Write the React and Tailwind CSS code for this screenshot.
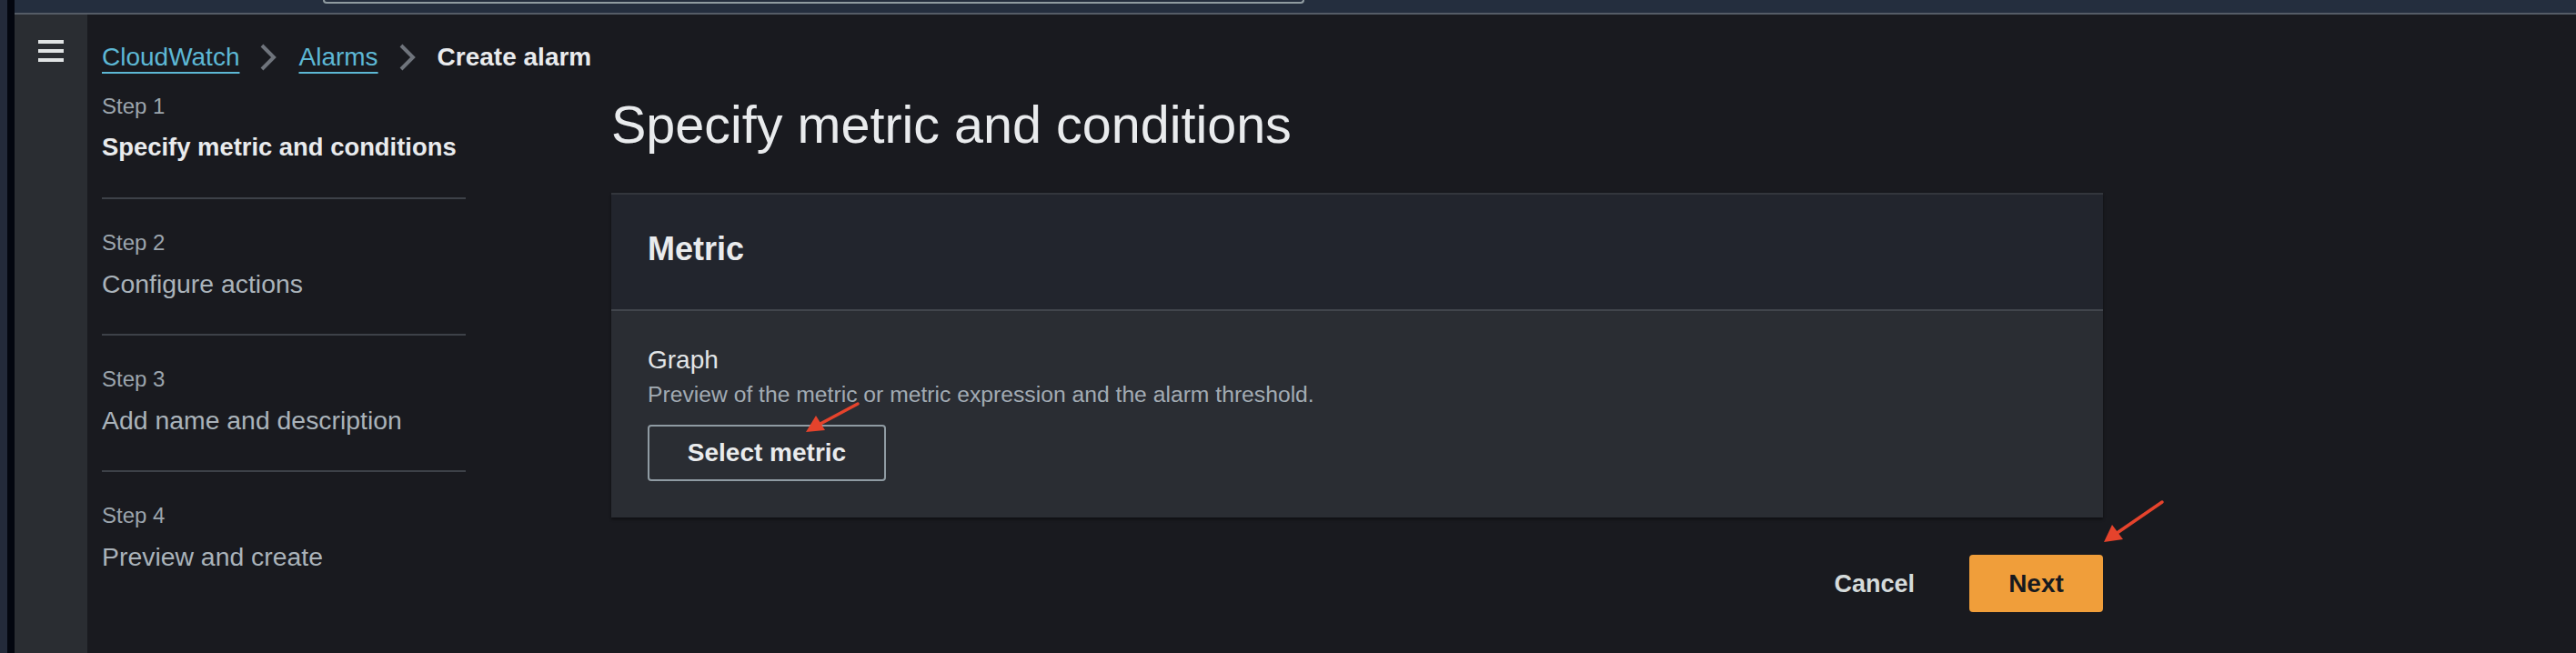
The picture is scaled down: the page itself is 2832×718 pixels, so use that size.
import React from "react";

const steps = [
  { label: "Step 1", title: "Specify metric and conditions", current: true },
  { label: "Step 2", title: "Configure actions" },
  { label: "Step 3", title: "Add name and description" },
  { label: "Step 4", title: "Preview and create" },
];

function Chevron() {
  return (
    <svg width="20" height="30" viewBox="0 0 20 30" className="shrink-0">
      <polyline points="3,2 16,15 3,28" fill="none" stroke="#6f747c" strokeWidth="4" />
    </svg>
  );
}

export default function App() {
  return (
    <div className="relative flex min-h-[718px] w-[2832px] overflow-hidden bg-[#191a1f] font-['Liberation_Sans',Arial,sans-serif]">
      {/* window edge */}
      <div className="w-[8px] shrink-0 bg-[#232a3a]" />
      <div className="w-[8px] shrink-0 bg-[#03060f]" />

      <div className="flex flex-1 flex-col">
        {/* Top nav (mostly cropped) */}
        <header className="h-[16px] shrink-0 border-b-2 border-[#555c66] bg-[#242e3e]">
          <div className="ml-[339px] h-[4px] w-[1079px] rounded-b-[5px] border-x-2 border-b-2 border-[#8f9ba0]" />
        </header>

        <div className="flex flex-1">
          {/* Side rail */}
          <aside className="flex w-[80px] shrink-0 justify-center bg-[#2a2d32] pt-[28px]">
            <div className="flex h-[24px] w-[28px] flex-col justify-between">
              <span className="h-[4px] w-full bg-[#e0e3e4]" />
              <span className="h-[4px] w-full bg-[#e0e3e4]" />
              <span className="h-[4px] w-full bg-[#e0e3e4]" />
            </div>
          </aside>

          <main className="flex-1 pl-[16px] pt-[27px]">
            {/* Breadcrumbs */}
            <nav className="flex items-center gap-[22px] text-[28px] leading-[40px]">
              <a className="text-[#5db8d5] underline decoration-2 underline-offset-[7px]">CloudWatch</a>
              <Chevron />
              <a className="ml-[1px] text-[#5db8d5] underline decoration-2 underline-offset-[7px]">Alarms</a>
              <Chevron />
              <span className="ml-[1px] font-bold text-[#e9ebed]">Create alarm</span>
            </nav>

            <div className="mt-[18px] flex gap-[160px]">
              {/* Wizard steps */}
              <ol className="w-[400px] shrink-0">
                {steps.map((s, i) => (
                  <li
                    key={s.label}
                    className={`${i === 0 ? "" : "pt-[32px]"} ${
                      i === steps.length - 1 ? "" : "border-b-2 border-[#3d4148] pb-[35px]"
                    }`}
                  >
                    <div className="text-[24px] leading-[32px] text-[#9ca5ad]">{s.label}</div>
                    <div
                      className={`mt-[9px] leading-[40px] ${
                        s.current ? "text-[27.4px] font-bold text-[#e9ebed]" : "text-[28.4px] text-[#aab3ba]"
                      }`}
                    >
                      {s.title}
                    </div>
                  </li>
                ))}
              </ol>

              {/* Content */}
              <section className="w-[1640px] shrink-0">
                <h1 className="text-[57.5px] font-normal leading-[72px] text-[#e9ebed]">
                  Specify metric and conditions
                </h1>

                <div className="mt-[39px] border-t-2 border-[#33363c] shadow-[0_2px_3px_rgba(0,0,0,0.45)]">
                  <div className="border-b-2 border-[#41454c] bg-[#22252d] px-[40px] pb-[44px] pt-[38px]">
                    <h2 className="text-[36px] font-bold leading-[44px] text-[#e9ebed]">Metric</h2>
                  </div>
                  <div className="bg-[#2a2d33] px-[40px] pb-[40px] pt-[34px]">
                    <div className="text-[28px] leading-[40px] text-[#e2e5e7]">Graph</div>
                    <p className="mt-[2px] text-[24.7px] leading-[32px] text-[#a2abb3]">
                      Preview of the metric or metric expression and the alarm threshold.
                    </p>
                    <button className="mt-[17px] h-[62px] w-[262px] rounded-[4px] border-2 border-[#8f9ba3] text-[28px] font-bold leading-[40px] text-[#e9ebed]">
                      Select metric
                    </button>
                  </div>
                </div>

                <div className="mt-[41px] flex items-center justify-end gap-[60px]">
                  <button className="text-[27px] font-bold leading-[40px] text-[#d5dbdb]">Cancel</button>
                  <button className="flex h-[63px] w-[147px] items-center justify-center rounded-[4px] bg-[#f09e3a] text-[28px] font-bold leading-[40px] text-[#16191f]">
                    Next
                  </button>
                </div>
              </section>
            </div>
          </main>
        </div>
      </div>

      {/* annotation arrows drawn on top of the screenshot */}
      <svg className="pointer-events-none absolute left-0 top-0" width="2832" height="718" viewBox="0 0 2832 718">
        <line x1="943" y1="444" x2="900" y2="467" stroke="#e5432c" strokeWidth="3.5" strokeLinecap="round" />
        <polygon points="886,475 897,457 907,473" fill="#e5432c" />
        <line x1="2377" y1="552" x2="2326" y2="587" stroke="#e5432c" strokeWidth="3.5" strokeLinecap="round" />
        <polygon points="2313,596 2322,577 2334,593" fill="#e5432c" />
      </svg>
    </div>
  );
}
